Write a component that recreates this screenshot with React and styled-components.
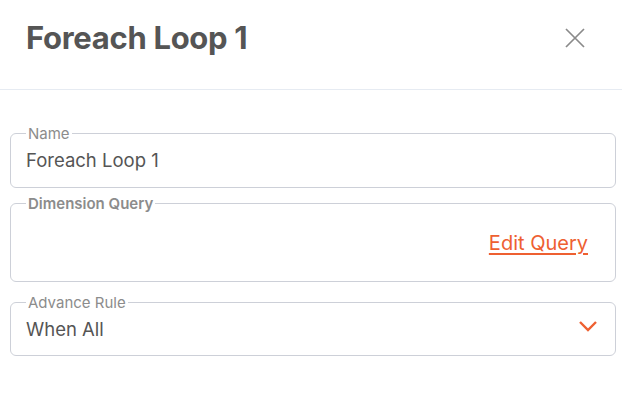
import React from "react";
import styled, { createGlobalStyle } from "styled-components";

const GlobalStyle = createGlobalStyle`
  body {
    margin: 0;
    background: #fff;
    font-family: Inter, "Noto Sans", sans-serif;
  }
`;

export default function App() {
  return (
    <>
      <GlobalStyle />
      <Panel>
        <Header>
          <Title>Foreach Loop 1</Title>
          <CloseButton aria-label="close">
            <svg width="22" height="22" viewBox="0 0 22 22">
              <path d="M2 2 L20 20 M20 2 L2 20" stroke="#8a8a8a" strokeWidth="1.7" fill="none" />
            </svg>
          </CloseButton>
        </Header>
        <Body>
          <Field $height={61}>
            <Legend>Name</Legend>
            <Value>Foreach Loop 1</Value>
          </Field>
          <Field $gap={7} $height={85}>
            <Legend $bold>Dimension Query</Legend>
            <QueryRow>
              <EditLink href="#">Edit Query</EditLink>
            </QueryRow>
          </Field>
          <Field $gap={12} $height={60}>
            <Legend>Advance Rule</Legend>
            <SelectRow>
              <Value>When All</Value>
              <svg width="20" height="12" viewBox="0 0 20 12">
                <path d="M2 2 L10 10 L18 2" stroke="#ee6031" strokeWidth="2.4" fill="none" />
              </svg>
            </SelectRow>
          </Field>
        </Body>
      </Panel>
    </>
  );
}

const Panel = styled.div`
  width: 622px;
  height: 393px;
  background: #fff;
`;

const Header = styled.div`
  height: 90px;
  border-bottom: 1px solid #e6ebf2;
  display: flex;
  align-items: center;
  justify-content: space-between;
  padding: 0 36px 14px 26px;
  box-sizing: border-box;
`;

const Title = styled.h1`
  margin: 0;
  font-size: 31px;
  font-weight: 700;
  color: #555;
  letter-spacing: -0.3px;
`;

const CloseButton = styled.button`
  border: none;
  background: none;
  padding: 0;
  display: flex;
`;

const Body = styled.div`
  padding: 35px 6px 0 10px;
`;

const Field = styled.fieldset`
  margin: ${(p) => p.$gap || 0}px 0 0;
  padding: 0 15px;
  border: 1px solid #cdd0d8;
  border-radius: 6px;
  height: ${(p) => p.$height || 54}px;
  box-sizing: content-box;
  min-width: 0;
`;

const Legend = styled.legend`
  padding: 0 2px;
  font-size: 15px;
  line-height: 17px;
  color: #8c8c8c;
  font-weight: ${(p) => (p.$bold ? 600 : 400)};
`;

const Value = styled.div`
  font-size: 18.5px;
  color: #555;
  line-height: 22px;
  margin-top: 7px;
`;

const QueryRow = styled.div`
  display: flex;
  justify-content: flex-end;
  padding: 19px 12px 0 0;
`;

const EditLink = styled.a`
  font-size: 20px;
  color: #ee6031;
  text-decoration: underline;
  text-underline-offset: 3px;
`;

const SelectRow = styled.div`
  display: flex;
  align-items: center;
  justify-content: space-between;
  padding-right: 2px;
`;
